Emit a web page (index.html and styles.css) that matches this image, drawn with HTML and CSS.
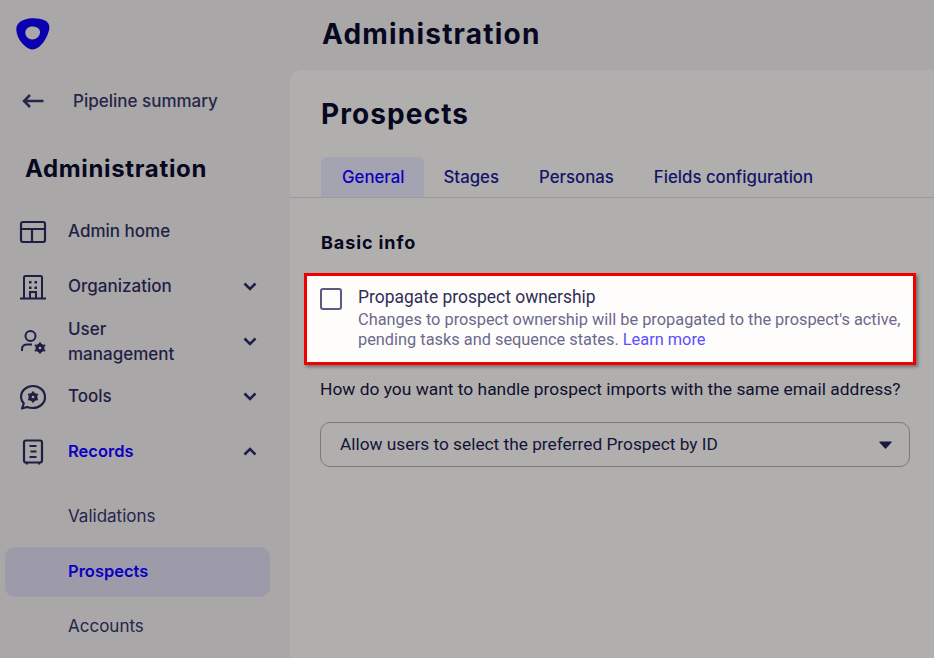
FILE: index.html
```html
<!DOCTYPE html>
<html lang="en">
<head>
    <meta charset="UTF-8">
    <meta name="viewport" content="width=device-width, initial-scale=1.0">
    <title>Administration - Prospects</title>
    <link rel="stylesheet" href="styles.css">
</head>
<body>
    <div class="app">
        <aside class="sidebar">
            <div class="logo">
                <svg width="34" height="32" viewBox="0 0 34 32">
                    <path fill-rule="evenodd" fill="#0a00b0" d="M9 1.500C14 -.2 23 -.2 29 2.600C33 4.600 34.500 8.500 32.500 14C30 22 25 29 19 31C15.500 32.200 12.500 31 9 28C3.500 23.500 .5 17 .3 11.500C.2 6.500 3.500 3.200 9 1.500ZM16.300 8.600C12.300 8.600 9.300 11.200 9.300 14.800C9.300 18.500 12.500 21.500 16.300 21.500C20.200 21.500 23.700 18.300 24 14.500C24.300 11 20.800 8.600 16.300 8.600Z"/>
                </svg>
            </div>
            <a class="back-link">
                <svg class="back-arrow" width="22" height="14" viewBox="0 0 22 14">
                    <path d="M21.500 7H2M8 1L2 7L8 13" fill="none" stroke="#26264a" stroke-width="2.500"/>
                </svg>
                <span>Pipeline summary</span>
            </a>
            <h2 class="side-title">Administration</h2>
            <nav>
                <ul class="nav-list">
                    <li class="nav-item">
                        <svg class="nav-icon" width="28" height="24" viewBox="0 0 28 24">
                            <rect x="2" y="2" width="24" height="20" rx="2" fill="none" stroke="#1f1f45" stroke-width="2.200"/>
                            <path d="M2 9H26M13 9V22" fill="none" stroke="#1f1f45" stroke-width="2.200"/>
                        </svg>
                        <span class="nav-label">Admin home</span>
                    </li>
                    <li class="nav-item">
                        <svg class="nav-icon" width="28" height="26" viewBox="0 0 28 26">
                            <path d="M5 24V3.500C5 2.500 5.500 2 6.500 2H21.500C22.500 2 23 2.500 23 3.500V24M1 24.500H27M11 24V18H17V24" fill="none" stroke="#1f1f45" stroke-width="2"/>
                            <path d="M10 7h2.500v2.500H10zM15.500 7H18v2.500h-2.500zM10 12.500h2.500V15H10zM15.500 12.500H18V15h-2.500z" fill="#1f1f45"/>
                        </svg>
                        <span class="nav-label">Organization</span>
                        <svg class="chevron" width="14" height="9" viewBox="0 0 14 9"><path d="M1.500 1.500L7 7L12.500 1.500" fill="none" stroke="#1f1f45" stroke-width="2.500"/></svg>
                    </li>
                    <li class="nav-item">
                        <svg class="nav-icon" width="28" height="26" viewBox="0 0 28 26">
                            <circle cx="11.500" cy="7" r="5" fill="none" stroke="#1f1f45" stroke-width="2"/>
                            <path d="M3 22V20C3 17 5.500 15.500 8 15.500H13" fill="none" stroke="#1f1f45" stroke-width="2"/>
                            <circle cx="21" cy="19" r="3" fill="none" stroke="#1f1f45" stroke-width="3"/>
                            <path d="M21 13.500V24.500M15.800 16L26.200 22M15.800 22L26.200 16" stroke="#1f1f45" stroke-width="2"/>
                            <circle cx="21" cy="19" r="1.300" fill="#a9a7a7"/>
                        </svg>
                        <span class="nav-label nav-label-wrap">User management</span>
                        <svg class="chevron" width="14" height="9" viewBox="0 0 14 9"><path d="M1.500 1.500L7 7L12.500 1.500" fill="none" stroke="#1f1f45" stroke-width="2.500"/></svg>
                    </li>
                    <li class="nav-item">
                        <svg class="nav-icon" width="28" height="26" viewBox="0 0 28 26">
                            <path d="M3 24.500L4.800 19.500C3 17.500 2 15.500 2 13C2 6.500 7.500 2 14 2C20.500 2 26 6.500 26 13C26 19.500 20.500 24 14 24C11 24 9.500 23.700 8 23Z" fill="none" stroke="#1f1f45" stroke-width="2.200" stroke-linejoin="round"/>
                            <circle cx="14" cy="13" r="3" fill="none" stroke="#1f1f45" stroke-width="3"/>
                            <path d="M14 7.500V18.500M9.200 10.200L18.800 15.800M9.200 15.800L18.800 10.200" stroke="#1f1f45" stroke-width="2"/>
                            <circle cx="14" cy="13" r="1.300" fill="#a9a7a7"/>
                        </svg>
                        <span class="nav-label">Tools</span>
                        <svg class="chevron" width="14" height="9" viewBox="0 0 14 9"><path d="M1.500 1.500L7 7L12.500 1.500" fill="none" stroke="#1f1f45" stroke-width="2.500"/></svg>
                    </li>
                    <li class="nav-item">
                        <svg class="nav-icon" width="28" height="26" viewBox="0 0 28 26">
                            <rect x="5" y="1.500" width="18" height="22" rx="2" fill="none" stroke="#1f1f45" stroke-width="2.200"/>
                            <path d="M10.500 7H17.500M11.500 12.500H17.500M10.500 18H17.500M8 24V25.500M20 24V25.500" stroke="#1f1f45" stroke-width="2"/>
                        </svg>
                        <span class="nav-label nav-label-active">Records</span>
                        <svg class="chevron" width="14" height="9" viewBox="0 0 14 9"><path d="M1.500 7.500L7 2L12.500 7.500" fill="none" stroke="#1f1f45" stroke-width="2.500"/></svg>
                    </li>
                </ul>
                <ul class="sub-list">
                    <li class="sub-item">Validations</li>
                    <li class="sub-item sub-item-active">Prospects</li>
                    <li class="sub-item">Accounts</li>
                </ul>
            </nav>
        </aside>

        <div class="main">
            <h1 class="page-title">Administration</h1>
            <section class="panel">
                <h2 class="panel-title">Prospects</h2>
                <div class="tabs">
                    <a class="tab tab-active">General</a>
                    <a class="tab">Stages</a>
                    <a class="tab">Personas</a>
                    <a class="tab">Fields configuration</a>
                </div>
                <div class="panel-body">
                    <h3 class="section-title">Basic info</h3>
                    <div class="highlight">
                        <span class="checkbox"></span>
                        <div>
                            <div class="option-title">Propagate prospect ownership</div>
                            <p class="option-text">Changes to prospect ownership will be propagated to the prospect's active, pending tasks and sequence states. <a class="learn-more">Learn more</a></p>
                        </div>
                    </div>
                    <p class="question">How do you want to handle prospect imports with the same email address?</p>
                    <div class="select">
                        <span class="select-value">Allow users to select the preferred Prospect by ID</span>
                        <svg width="13" height="8" viewBox="0 0 13 8"><path d="M1 0.500H12C12.500 0.500 12.800 1 12.500 1.500L7 7.500C6.700 7.800 6.300 7.800 6 7.500L.5 1.500C.2 1 .5 .5 1 .5Z" fill="#1a1a40"/></svg>
                    </div>
                </div>
            </section>
        </div>
    </div>
</body>
</html>
```

FILE: styles.css
```css
html, body {
    height: 100%;
}

body {
    font-family: Inter, "Liberation Sans", sans-serif;
    margin: 0;
    padding: 0;
    background-color: #a9a7a7;
    color: #0c0c2a;
    overflow: hidden;
}

.app {
    display: flex;
    height: 658px;
    overflow: hidden;
}

.sidebar {
    width: 290px;
    flex-shrink: 0;
    box-sizing: border-box;
    padding-top: 18px;
}

.logo {
    height: 32px;
    padding-left: 16px;
}

.back-link {
    display: flex;
    align-items: center;
    margin-top: 35px;
    padding-left: 22px;
    height: 32px;
    font-size: 17px;
    font-weight: 500;
    color: #25254a;
}

.back-arrow {
    margin-right: 29px;
}

.side-title {
    margin: 36px 0 0 25px;
    font-size: 24px;
    line-height: 32px;
    font-weight: 700;
    letter-spacing: 0.65px;
    color: #07071f;
}

.nav-list, .sub-list {
    list-style-type: none;
    margin: 0;
    padding: 0;
}

.nav-list {
    margin-top: 19px;
}

.nav-item {
    display: flex;
    align-items: center;
    height: 55px;
    padding-left: 19px;
    width: 238px;
}

.nav-icon {
    flex-shrink: 0;
    margin-right: 21px;
}

.nav-label {
    flex: 1;
    font-size: 17px;
    line-height: 25px;
    font-weight: 500;
    color: #1f1f45;
}

.nav-label-wrap {
    padding-right: 40px;
}

.nav-label-active {
    color: #0c00c0;
    font-size: 16.5px;
    font-weight: 600;
}

.chevron {
    flex-shrink: 0;
}

.sub-list {
    margin-top: 13px;
}

.sub-item {
    display: flex;
    align-items: center;
    height: 50px;
    box-sizing: border-box;
    padding-bottom: 2px;
    margin: 0 20px 5px 5px;
    padding-left: 63px;
    font-size: 17px;
    color: #25254a;
    border-radius: 10px;
}

.sub-item-active {
    background-color: #9d9ba9;
    color: #0c00c0;
    font-size: 16.5px;
    font-weight: 600;
}

.main {
    flex: 1;
    min-width: 0;
    display: flex;
    flex-direction: column;
}

.page-title {
    margin: 0;
    height: 70px;
    box-sizing: border-box;
    padding: 16px 0 0 32px;
    font-size: 28px;
    line-height: 36px;
    font-weight: 700;
    letter-spacing: 1.2px;
    color: #07071f;
}

.panel {
    flex: 1;
    background-color: #b0afad;
    border-top-left-radius: 12px;
}

.panel-title {
    margin: 0;
    padding: 26px 0 0 31px;
    font-size: 28px;
    line-height: 36px;
    font-weight: 700;
    letter-spacing: 1.1px;
    color: #07071f;
}

.tabs {
    display: flex;
    margin-top: 25px;
    padding-left: 31px;
    border-bottom: 1px solid #9a99a0;
}

.tab {
    padding: 0 20px;
    height: 40px;
    line-height: 40px;
    font-size: 16.8px;
    font-weight: 500;
    color: #14146a;
    border-radius: 6px 6px 0 0;
}

.tab-active {
    padding-left: 21px;
    padding-right: 19px;
    background-color: #a4a3b1;
    color: #0c00c0;
}

.panel-body {
    padding: 0 24px 0 30px;
}

.section-title {
    margin: 33px 0 0 1px;
    font-size: 18px;
    line-height: 24px;
    font-weight: 700;
    letter-spacing: 0.9px;
    color: #07071f;
}

.highlight {
    display: flex;
    margin: 18px -6px 0 -16px;
    padding: 11px 8px 10px 13px;
    height: 92px;
    box-sizing: border-box;
    background-color: #fffdfc;
    border: 3px solid #f00000;
    box-shadow: 2px 2px 3px rgba(60, 60, 60, 0.55);
    font-family: Roboto, "Liberation Sans", sans-serif;
}

.checkbox {
    flex-shrink: 0;
    width: 18px;
    height: 18px;
    margin: 1px 16px 0 0;
    border: 2px solid #5b5a80;
    border-radius: 3px;
}

.option-title {
    font-size: 17.45px;
    line-height: 20px;
    color: #2f2f55;
}

.option-text {
    margin: 3px 0 0;
    font-size: 16.35px;
    line-height: 20px;
    color: #6a6a8c;
}

.learn-more {
    color: #5b4fff;
}

.question {
    margin: 12px 0 0;
    font-family: Roboto, "Liberation Sans", sans-serif;
    font-size: 17.4px;
    line-height: 24px;
    color: #10102e;
}

.select {
    display: flex;
    align-items: center;
    justify-content: space-between;
    margin-top: 21px;
    height: 45px;
    box-sizing: border-box;
    padding: 0 17px 0 19px;
    border: 1px solid #7b7b7b;
    border-radius: 10px;
    font-family: Roboto, "Liberation Sans", sans-serif;
    font-size: 17.3px;
    color: #14143a;
}

.select-value {
    margin-bottom: 2px;
}
```
